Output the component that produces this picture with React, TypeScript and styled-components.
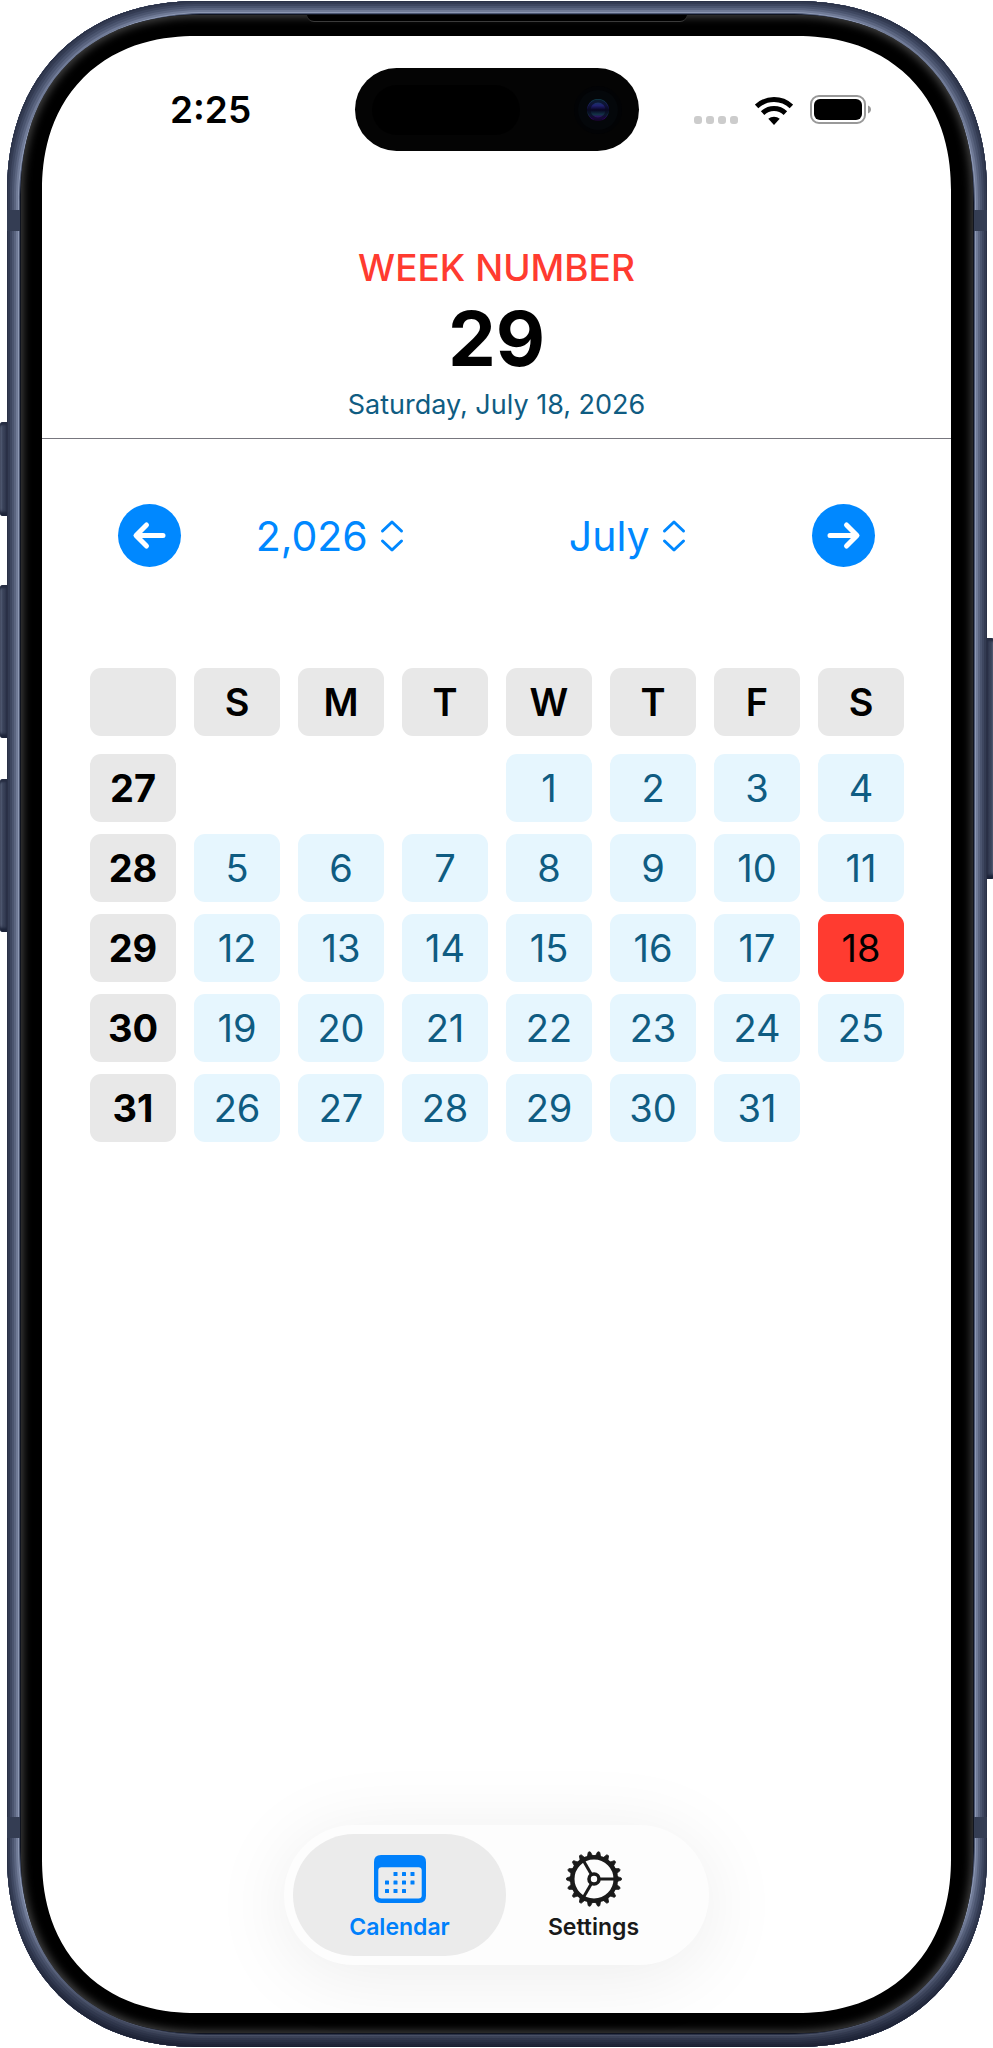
import React, { useState } from "react";
import styled, { createGlobalStyle, css } from "styled-components";

const GlobalStyle = createGlobalStyle`
  *, *::before, *::after { box-sizing: border-box; }
  body {
    margin: 0;
    background: #fff;
    font-family: Inter, "Liberation Sans", sans-serif;
    color: #000;
  }
  button, select { font: inherit; }
`;

const Page = styled.div`
  display: flex;
  flex-direction: column;
  min-height: 100vh;
  padding: 1px 6px 1px 7px;
  overflow: hidden;
`;

const smoothCorner = css`
  corner-shape: superellipse(1.14);
`;

const Frame = styled.div`
  position: relative;
  flex: 1;
  display: flex;
  flex-direction: column;
  padding: 14px;
  border-radius: 192px;
  ${smoothCorner}
  background: #10141f;
  box-shadow:
    inset 0 0 0 1px #2a3146,
    inset 0 0 0 3px #333b52,
    inset 0 0 0 5px #3e4760,
    inset 0 0 0 7px #4b556f,
    inset 0 0 0 9px #5b6580,
    inset 0 0 0 11px #707b97,
    inset 0 0 0 12px #8d98b3,
    inset 0 0 0 13px #4a5571;

  &::before {
    content: "";
    position: absolute;
    inset: 0;
    border-radius: inherit;
    ${smoothCorner}
    background: linear-gradient(to top, rgba(16, 20, 36, 0.6), rgba(16, 20, 36, 0) 130px);
  }
`;

const Bezel = styled.div`
  position: relative;
  flex: 1;
  display: flex;
  flex-direction: column;
  padding: 21px 22px 20px 21px;
  border-radius: 177px;
  ${smoothCorner}
  background: #000;
  box-shadow: inset 0 0 8px 2px #444;
`;

const Screen = styled.main`
  flex: 1;
  display: flex;
  flex-direction: column;
  border-radius: 154px;
  ${smoothCorner}
  background: #fff;
`;

const SideButton = styled.span<{ $side: "left" | "right"; $top: number; $height: number }>`
  position: absolute;
  top: ${(p) => p.$top}px;
  ${(p) => p.$side}: -7px;
  width: 7px;
  height: ${(p) => p.$height}px;
  border-radius: ${(p) => (p.$side === "left" ? "3px 0 0 3px" : "0 3px 3px 0")};
  background: linear-gradient(
    to ${(p) => (p.$side === "left" ? "right" : "left")},
    #7d879f,
    #3a435a 40%,
    #333b52
  );
  box-shadow: inset 0 3px 2px #262d42, inset 0 -4px 3px #1c2338;
`;

const AntennaBand = styled.span<{ $side: "left" | "right"; $end: "top" | "bottom" }>`
  position: absolute;
  ${(p) => p.$end}: 209px;
  ${(p) => p.$side}: 0;
  width: 13px;
  height: 21px;
  background: #343d53;
`;

const Earpiece = styled.span`
  position: absolute;
  top: 14px;
  left: 50%;
  width: 380px;
  height: 7px;
  transform: translateX(-50%);
  border-radius: 0 0 12px 12px;
  background: #000;
  border-bottom: 1px solid #3a3a3a;
`;

const StatusBar = styled.header`
  display: grid;
  grid-template-columns: 1fr 284px 1fr;
  align-items: center;
  padding-top: 32px;
`;

const Clock = styled.time`
  padding-left: 128px;
  font-size: 37px;
  line-height: 46px;
  font-weight: 600;
`;

const Island = styled.div`
  display: flex;
  align-items: center;
  justify-content: space-between;
  height: 83px;
  padding: 0 16px 0 17px;
  border-radius: 42px;
  background: #040404;
`;

const Sensor = styled.span`
  width: 148px;
  height: 50px;
  border-radius: 25px;
  background: #000;
`;

const StatusIcons = styled.div`
  display: flex;
  align-items: flex-end;
  justify-content: flex-end;
  gap: 17px;
  padding-right: 79px;
`;

const SignalDots = styled.span`
  display: flex;
  gap: 4px;
  padding-bottom: 1px;
  & > i {
    width: 8px;
    height: 8px;
    border-radius: 3px;
    background: #ccc;
  }
`;

const Summary = styled.section`
  display: flex;
  flex-direction: column;
  align-items: center;
  padding: 94px 0 16px;
  border-bottom: 1px solid #77767e;
`;

const Eyebrow = styled.h1`
  margin: 0;
  font-size: 37px;
  line-height: 46px;
  font-weight: 500;
  color: #ff3b30;
`;

const WeekNumber = styled.p`
  margin: 9px 0 12px;
  font-size: 76px;
  line-height: 76px;
  font-weight: 700;
`;

const FullDate = styled.p`
  margin: 0;
  font-size: 27px;
  line-height: 34px;
  color: #0f5c82;
`;

const Navigator = styled.nav`
  display: flex;
  align-items: center;
  padding: 65px 76px 0;
`;

const RoundButton = styled.button`
  display: flex;
  flex: none;
  width: 63px;
  height: 63px;
  padding: 0;
  border: 0;
  border-radius: 50%;
  background: #0088ff;
  cursor: pointer;
`;

const Pickers = styled.div`
  flex: 1;
  display: grid;
  grid-template-columns: 1fr 1fr;
  padding-right: 36px;
`;

const Picker = styled.label`
  display: flex;
  align-items: center;
  justify-content: center;
  gap: 12px;
  color: #0088ff;
`;

const PickerSelect = styled.select`
  appearance: none;
  field-sizing: content;
  padding: 0;
  border: 0;
  background: none;
  color: inherit;
  font-size: 41px;
  line-height: 50px;
  font-weight: 400;
  cursor: pointer;
`;

const Calendar = styled.table`
  display: flex;
  flex-direction: column;
  gap: 18px;
  padding: 101px 47px 0 48px;
`;

const Weeks = styled.tbody`
  display: flex;
  flex-direction: column;
  gap: 12px;
`;

const WeekRow = styled.tr`
  display: grid;
  grid-template-columns: repeat(8, minmax(0, 1fr));
  gap: 18px;
`;

const cell = css`
  height: 68px;
  padding: 0;
  border-radius: 11px;
  font-size: 38px;
  line-height: 68px;
  text-align: center;
`;

const HeadCell = styled.th<{ $strong?: boolean }>`
  ${cell}
  background: #e8e8e8;
  font-weight: ${(p) => (p.$strong ? 700 : 600)};
`;

const BlankHead = styled.td`
  ${cell}
  background: #e8e8e8;
`;

const DayCell = styled.td<{ $state: "empty" | "day" | "today" }>`
  ${cell}
  background: ${(p) => ({ empty: "transparent", day: "#e6f6fe", today: "#ff3b30" })[p.$state]};
  color: ${(p) => (p.$state === "today" ? "#000" : "#0f5c82")};
`;

const TabBar = styled.nav`
  display: flex;
  align-self: center;
  margin: auto 0 48px;
  padding: 9px;
  border-radius: 70px;
  background: #fdfdfd;
  box-shadow: 0 10px 80px rgba(0, 0, 0, 0.08);
`;

const Tab = styled.button<{ $active: boolean }>`
  display: flex;
  flex-direction: column;
  align-items: center;
  width: 213px;
  height: 122px;
  padding: 16px 0 0;
  border: 0;
  border-radius: 61px;
  background: ${(p) => (p.$active ? "#ebebeb" : "transparent")};
  color: ${(p) => (p.$active ? "#0080fb" : "#1a1a1a")};
  font-size: 23px;
  line-height: 28px;
  font-weight: 600;
  cursor: pointer;
  & + & {
    margin-left: -19px;
  }
`;

const TabIcon = styled.span`
  display: flex;
  align-items: center;
  justify-content: center;
  height: 58px;
  margin-bottom: 5px;
`;

const CameraLens = () => (
  <svg width="50" height="50" viewBox="0 0 50 50" aria-hidden="true">
    <defs>
      <linearGradient id="lens" x1="0" y1="0" x2="0" y2="1">
        <stop offset="0" stopColor="#114a55" />
        <stop offset="0.3" stopColor="#20206e" />
        <stop offset="0.5" stopColor="#080420" />
        <stop offset="0.7" stopColor="#123246" />
        <stop offset="0.88" stopColor="#3c0070" />
        <stop offset="1" stopColor="#14051f" />
      </linearGradient>
    </defs>
    <circle cx="25" cy="25" r="24" fill="#020305" />
    <circle cx="25" cy="25" r="20" fill="#04070a" />
    <circle cx="25" cy="25" r="11" fill="url(#lens)" />
    <circle cx="25" cy="25" r="9" fill="none" stroke="#090c20" strokeWidth="3" opacity="0.7" />
  </svg>
);

const WifiIcon = () => (
  <svg width="38" height="28" viewBox="0 0 38 28" role="img" aria-label="Wi-Fi">
    <g fill="none" stroke="#000" strokeWidth="5">
      <path d="M1.6 9.4A25.5 25.5 0 0 1 36.4 9.4" />
      <path d="M7.6 16.1A16.5 16.5 0 0 1 30.4 16.1" />
    </g>
    <path d="M19 28L13.3 21.8A8.6 8.6 0 0 1 24.7 21.8Z" />
  </svg>
);

const BatteryIcon = () => (
  <svg width="62" height="30" viewBox="0 0 62 30" role="img" aria-label="Battery">
    <rect x="1" y="1" width="54" height="27" rx="8" fill="none" stroke="#999" strokeWidth="2" />
    <rect x="4" y="4" width="48" height="21" rx="6" />
    <path d="M58 10.5C60 11.3 61 12.7 61 14.5S60 17.7 58 18.5Z" fill="#999" />
  </svg>
);

const ArrowIcon = ({ direction }: { direction: "left" | "right" }) => (
  <svg width="63" height="63" viewBox="0 0 63 63" aria-hidden="true">
    <path
      d={direction === "left" ? "M45 31.5H18.5M28.5 21L18 31.5L28.5 42" : "M18 31.5H44.5M34.5 21L45 31.5L34.5 42"}
      fill="none"
      stroke="#fff"
      strokeWidth="5"
      strokeLinecap="round"
      strokeLinejoin="round"
    />
  </svg>
);

const UpDownIcon = () => (
  <svg width="24" height="34" viewBox="0 0 24 34" aria-hidden="true">
    <path
      d="M2.5 12L12 3L21.5 12M2.5 22L12 31L21.5 22"
      fill="none"
      stroke="#0088ff"
      strokeWidth="3"
      strokeLinecap="round"
      strokeLinejoin="round"
    />
  </svg>
);

const CALENDAR_DOTS = [
  [21.5, 19], [30, 19], [38.5, 19],
  [13, 27.5], [21.5, 27.5], [30, 27.5], [38.5, 27.5],
  [13, 36], [21.5, 36], [30, 36],
];

const CalendarIcon = () => (
  <svg width="52" height="48" viewBox="0 0 52 48" fill="currentColor" aria-hidden="true">
    <path
      fillRule="evenodd"
      d="M7 0H45Q52 0 52 7V41Q52 48 45 48H7Q0 48 0 41V7Q0 0 7 0ZM7.5 12.3Q4.3 12.3 4.3 15.5V40.5Q4.3 43.5 7.5 43.5H44.5Q47.7 43.5 47.7 40.5V15.5Q47.7 12.3 44.5 12.3Z"
    />
    {CALENDAR_DOTS.map(([x, y]) => (
      <rect key={`${x}-${y}`} x={x - 2} y={y - 2} width="4" height="4" rx="0.6" />
    ))}
  </svg>
);

const GearIcon = () => (
  <svg width="58" height="58" viewBox="-29 -29 58 58" fill="none" stroke="currentColor" aria-hidden="true">
    <circle r="21.8" strokeWidth="4.6" />
    <circle r="5" strokeWidth="3.6" />
    {[0, 120, 240].map((angle) => (
      <path key={angle} d="M6 0H21" strokeWidth="3" transform={`rotate(${angle})`} />
    ))}
    {Array.from({ length: 18 }, (_, i) => (
      <path
        key={i}
        d="M23 -2.6L27.2 -1.1Q28 0 27.2 1.1L23 2.6Z"
        fill="currentColor"
        strokeWidth="0.8"
        transform={`rotate(${i * 20})`}
      />
    ))}
  </svg>
);

const MONTHS = [
  "January", "February", "March", "April", "May", "June",
  "July", "August", "September", "October", "November", "December",
];
const YEARS = [2024, 2025, 2026, 2027, 2028];
const WEEKDAYS = [
  { short: "S", name: "Sunday" },
  { short: "M", name: "Monday" },
  { short: "T", name: "Tuesday" },
  { short: "W", name: "Wednesday" },
  { short: "T", name: "Thursday" },
  { short: "F", name: "Friday" },
  { short: "S", name: "Saturday" },
];

const TODAY = new Date(2026, 6, 18);

/* ISO week number of the Monday that falls inside a Sunday-first row. */
function weekOf(sunday: Date) {
  const thursday = new Date(sunday.getFullYear(), sunday.getMonth(), sunday.getDate() + 4);
  const start = new Date(thursday.getFullYear(), 0, 1);
  const days = Math.round((thursday.getTime() - start.getTime()) / 86400000);
  return Math.floor(days / 7) + 1;
}

function buildWeeks(year: number, month: number) {
  const lead = new Date(year, month, 1).getDay();
  const count = new Date(year, month + 1, 0).getDate();
  return Array.from({ length: Math.ceil((lead + count) / 7) }, (_, row) => ({
    week: weekOf(new Date(year, month, row * 7 - lead + 1)),
    days: Array.from({ length: 7 }, (_, col) => {
      const day = row * 7 + col - lead + 1;
      return day >= 1 && day <= count ? day : null;
    }),
  }));
}

export default function App() {
  const [year, setYear] = useState(2026);
  const [month, setMonth] = useState(6);
  const [tab, setTab] = useState("calendar");

  const step = (delta: number) => {
    const next = new Date(year, month + delta, 1);
    setYear(next.getFullYear());
    setMonth(next.getMonth());
  };

  const isToday = (day: number) =>
    year === TODAY.getFullYear() && month === TODAY.getMonth() && day === TODAY.getDate();

  return (
    <Page>
      <GlobalStyle />
      <Frame>
        <SideButton $side="left" $top={421} $height={94} />
        <SideButton $side="left" $top={584} $height={153} />
        <SideButton $side="left" $top={778} $height={153} />
        <SideButton $side="right" $top={637} $height={241} />
        <AntennaBand $side="left" $end="top" />
        <AntennaBand $side="right" $end="top" />
        <AntennaBand $side="left" $end="bottom" />
        <AntennaBand $side="right" $end="bottom" />
        <Bezel>
          <Screen>
            <StatusBar>
              <Clock>2:25</Clock>
              <Island>
                <Sensor />
                <CameraLens />
              </Island>
              <StatusIcons>
                <SignalDots>
                  <i /><i /><i /><i />
                </SignalDots>
                <WifiIcon />
                <BatteryIcon />
              </StatusIcons>
            </StatusBar>

            <Summary>
              <Eyebrow>WEEK NUMBER</Eyebrow>
              <WeekNumber>29</WeekNumber>
              <FullDate>Saturday, July 18, 2026</FullDate>
            </Summary>

            <Navigator aria-label="Month">
              <RoundButton type="button" aria-label="Previous month" onClick={() => step(-1)}>
                <ArrowIcon direction="left" />
              </RoundButton>
              <Pickers>
                <Picker>
                  <PickerSelect aria-label="Year" value={year} onChange={(e) => setYear(Number(e.target.value))}>
                    {YEARS.map((y) => (
                      <option key={y} value={y}>{y.toLocaleString("en-US")}</option>
                    ))}
                  </PickerSelect>
                  <UpDownIcon />
                </Picker>
                <Picker>
                  <PickerSelect aria-label="Month" value={month} onChange={(e) => setMonth(Number(e.target.value))}>
                    {MONTHS.map((name, i) => (
                      <option key={name} value={i}>{name}</option>
                    ))}
                  </PickerSelect>
                  <UpDownIcon />
                </Picker>
              </Pickers>
              <RoundButton type="button" aria-label="Next month" onClick={() => step(1)}>
                <ArrowIcon direction="right" />
              </RoundButton>
            </Navigator>

            <Calendar>
              <thead>
                <WeekRow>
                  <BlankHead />
                  {WEEKDAYS.map((d) => (
                    <HeadCell key={d.name} scope="col" abbr={d.name}>{d.short}</HeadCell>
                  ))}
                </WeekRow>
              </thead>
              <Weeks>
                {buildWeeks(year, month).map(({ week, days }) => (
                  <WeekRow key={week}>
                    <HeadCell scope="row" $strong>{week}</HeadCell>
                    {days.map((day, i) => (
                      <DayCell key={i} $state={day === null ? "empty" : isToday(day) ? "today" : "day"}>
                        {day}
                      </DayCell>
                    ))}
                  </WeekRow>
                ))}
              </Weeks>
            </Calendar>

            <TabBar aria-label="Sections">
              <Tab type="button" $active={tab === "calendar"} onClick={() => setTab("calendar")}>
                <TabIcon><CalendarIcon /></TabIcon>
                Calendar
              </Tab>
              <Tab type="button" $active={tab === "settings"} onClick={() => setTab("settings")}>
                <TabIcon><GearIcon /></TabIcon>
                Settings
              </Tab>
            </TabBar>
          </Screen>
        </Bezel>
        <Earpiece />
      </Frame>
    </Page>
  );
}
